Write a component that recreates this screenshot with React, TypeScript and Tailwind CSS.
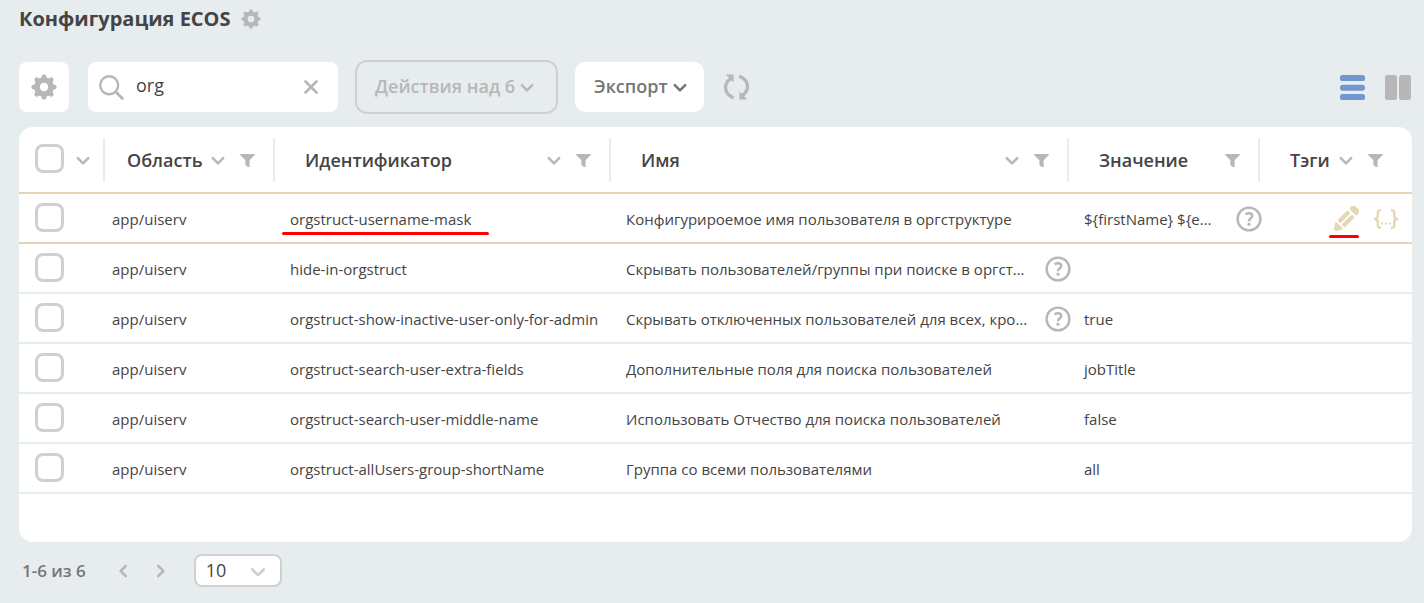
import { useState } from "react";

type Row = {
  scope: string;
  id: string;
  name: string;
  nameHint?: boolean;
  value: string;
  valueHint?: boolean;
  active?: boolean;
};

const rows: Row[] = [
  { scope: "app/uiserv", id: "orgstruct-username-mask", name: "Конфигурироемое имя пользователя в оргструктуре", value: "${firstName} ${e…", valueHint: true, active: true },
  { scope: "app/uiserv", id: "hide-in-orgstruct", name: "Скрывать пользователей/группы при поиске в оргст…", nameHint: true, value: "" },
  { scope: "app/uiserv", id: "orgstruct-show-inactive-user-only-for-admin", name: "Скрывать отключенных пользователей для всех, кро…", nameHint: true, value: "true" },
  { scope: "app/uiserv", id: "orgstruct-search-user-extra-fields", name: "Дополнительные поля для поиска пользователей", value: "jobTitle" },
  { scope: "app/uiserv", id: "orgstruct-search-user-middle-name", name: "Использовать Отчество для поиска пользователей", value: "false" },
  { scope: "app/uiserv", id: "orgstruct-allUsers-group-shortName", name: "Группа со всеми пользователями", value: "all" },
];

function Gear({ className }: { className: string }) {
  return (
    <svg viewBox="0 0 26 26" className={className} aria-hidden="true">
      <circle cx="13" cy="13" r="7" fill="none" stroke="currentColor" strokeWidth="5.6" />
      {[0, 45, 90, 135, 180, 225, 270, 315].map((angle) => (
        <path
          key={angle}
          d="M9.8 5 11 1.6Q11.3 .5 12.2 .5h1.6Q14.7 .5 15 1.6L16.2 5Z"
          fill="currentColor"
          transform={`rotate(${angle} 13 13)`}
        />
      ))}
    </svg>
  );
}

function Chevron({ className }: { className: string }) {
  return (
    <svg viewBox="0 0 14 10" className={className} fill="none" stroke="currentColor" strokeWidth="2.5" strokeLinecap="round" strokeLinejoin="round" aria-hidden="true">
      <path d="M1.8 2.2 7 7.4 12.2 2.2" />
    </svg>
  );
}

function Funnel() {
  return (
    <svg viewBox="0 0 15 13" className="h-[13px] w-[15px]" fill="currentColor" aria-hidden="true">
      <path d="M.2 0h14.6v1L9.6 6.2V13H7.8L5.4 11V6.2L.2 1Z" />
    </svg>
  );
}

function Hint() {
  return (
    <button type="button" aria-label="Подсказка" className="-mr-[2px] shrink-0 text-[#b7b7b7]">
      <svg viewBox="0 0 26 26" className="block size-[26px]" fill="none" stroke="currentColor" aria-hidden="true">
        <circle cx="13" cy="13" r="11.4" strokeWidth="2.4" />
        <path d="M9.6 8.4Q11.2 7.3 13 7.3c2 0 3.2 1 3.2 2.6 0 1.4-.9 2-1.8 2.7-.9.7-1.4 1.2-1.4 2.6" strokeWidth="2.5" />
        <circle cx="13" cy="18.2" r="1.6" fill="currentColor" stroke="none" />
      </svg>
    </button>
  );
}

function Pencil() {
  return (
    <svg viewBox="0 0 26 26" className="block size-[26px]" fill="currentColor" aria-hidden="true">
      <g transform="rotate(45 13 13)">
        <rect x="7.8" y="-2.8" width="10.4" height="6.4" rx="1.8" />
        <rect x="7.8" y="5.6" width="4.4" height="14.6" rx="1.3" />
        <rect x="13.8" y="5.6" width="4.4" height="14.6" rx="1.3" />
        <path d="M8.6 22h8.8q1 0 .6 1l-3.4 5.4q-1.6 1.6-3.2 0L8 23q-.4-1 .6-1Z" />
      </g>
    </svg>
  );
}

function Braces() {
  return (
    <svg viewBox="0 0 26 22" className="block h-[22px] w-[26px]" fill="none" stroke="currentColor" strokeWidth="2.3" aria-hidden="true">
      <path d="M8 2.3H6.6Q4.8 2.3 4.8 4.2V8Q4.8 11 1 11 4.8 11 4.8 14v3.8q0 1.9 1.8 1.9H8" />
      <path d="M18 2.3h1.4q1.8 0 1.8 1.9V8q0 3 3.8 3-3.8 0-3.8 3v3.8q0 1.9-1.8 1.9H18" />
      <path d="M8.2 15.5h2M12 15.5h2M15.8 15.5h2" strokeWidth="2" />
    </svg>
  );
}

function Tick({ label }: { label: string }) {
  return (
    <input
      type="checkbox"
      aria-label={label}
      className="mb-[2px] block size-[29px] shrink-0 appearance-none rounded-lg border-3 border-[#d0d0d0] bg-white checked:bg-[#7396cd]"
    />
  );
}

function Head({ title, sortable = true, last = false }: { title: string; sortable?: boolean; last?: boolean }) {
  return (
    <th scope="col" className="h-[67px] border-b-2 border-[#e4d8b4] p-0 text-left">
      <div className={last ? "flex h-11 items-center pr-[29px] pl-[30px]" : "flex h-11 items-center border-r-2 border-[#e7ecee] pr-[18px] pl-[30px]"}>
        <span className="grow text-[18px] leading-6 font-semibold">{title}</span>
        {sortable && (
          <button type="button" aria-label={"Сортировать: " + title} className="mt-[2px] mr-[15px] text-[#b7b7b7]">
            <Chevron className="block h-[10px] w-[14px]" />
          </button>
        )}
        <button type="button" aria-label={"Фильтр: " + title} className="mt-px text-[#b7b7b7]">
          <Funnel />
        </button>
      </div>
    </th>
  );
}

export default function App() {
  const [query, setQuery] = useState("org");

  return (
    <main className="min-h-screen bg-[#e7ecee] pr-3 pb-4 pl-[19px] font-['Open_Sans','Noto_Sans',sans-serif] text-[#444]">
      <header className="flex h-[38px] items-center gap-[10px]">
        <h1 className="text-[20px] leading-6 font-bold">Конфигурация ECOS</h1>
        <button type="button" aria-label="Настройки журнала" className="text-[#b7b7b7]">
          <Gear className="block size-5" />
        </button>
      </header>

      <div className="mt-[22px] flex h-[54px] items-center gap-[17px]">
        <button type="button" aria-label="Настройки" className="mr-[2px] flex size-[50px] items-center justify-center rounded-lg bg-white text-[#b7b7b7]">
          <Gear className="size-[26px]" />
        </button>

        <div className="flex h-[50px] w-[250px] items-center rounded-lg bg-white pr-5 pl-[11px] text-[#b7b7b7]">
          <svg viewBox="0 0 25 25" className="size-[25px] shrink-0" fill="none" stroke="currentColor" strokeWidth="2.4" strokeLinecap="round" aria-hidden="true">
            <circle cx="10.2" cy="10.2" r="9" />
            <path d="m17 17 6.4 6.4" strokeWidth="2.8" />
          </svg>
          <input
            type="text"
            aria-label="Поиск"
            value={query}
            onChange={(e) => setQuery(e.target.value)}
            className="ml-3 w-0 grow bg-transparent pb-1 text-[18px] leading-6 text-[#444] outline-none"
          />
          <button type="button" aria-label="Очистить" onClick={() => setQuery("")}>
            <svg viewBox="0 0 14 14" className="block size-[14px]" fill="none" stroke="currentColor" strokeWidth="2.6" strokeLinecap="round" aria-hidden="true">
              <path d="m1.5 1.5 11 11M12.5 1.5l-11 11" />
            </svg>
          </button>
        </div>

        <button type="button" disabled className="flex h-[54px] w-[203px] items-center gap-[5px] rounded-xl border-2 border-[#d0d0d0] pb-0.5 pl-[18px] text-[18px] leading-6 font-semibold whitespace-nowrap text-[#b7b7b7]">
          Действия над 6
          <Chevron className="mt-1 h-[10px] w-[14px]" />
        </button>

        <button type="button" className="flex h-[50px] w-[129px] items-center gap-[5px] rounded-[10px] bg-white pb-0.5 pl-[19px] text-[18px] leading-6 font-semibold text-[#767676]">
          Экспорт
          <Chevron className="mt-1 h-[10px] w-[14px]" />
        </button>

        <button type="button" aria-label="Обновить" className="ml-[2px] text-[#b7b7b7]">
          <svg viewBox="0 0 26 26" className="block size-[26px]" fill="none" stroke="currentColor" strokeWidth="3.2" aria-hidden="true">
            <path d="M7.6 4.6C.2 9.8.6 20 10.8 23.8" />
            <path d="M19.4 21.4C26.8 16.2 26.4 6 16.2 2.2" />
            <path d="M2.6.6h8v8Z" fill="currentColor" stroke="none" />
            <path d="M24.4 25.4h-8v-8Z" fill="currentColor" stroke="none" />
          </svg>
        </button>

        <div className="ml-auto flex items-center gap-5 pr-px">
          <button type="button" aria-label="Список" className="text-[#7396cd]">
            <svg viewBox="0 0 25 25" className="block size-[25px]" fill="currentColor" aria-hidden="true">
              <rect y="0" width="25" height="6" rx="2.6" />
              <rect y="9.7" width="25" height="6" rx="2.6" />
              <rect y="19" width="25" height="6" rx="2.6" />
            </svg>
          </button>
          <button type="button" aria-label="Просмотр" className="text-[#b7b7b7]">
            <svg viewBox="0 0 26 25" className="block h-[25px] w-[26px]" fill="currentColor" aria-hidden="true">
              <rect width="12" height="25" rx="2.5" />
              <rect x="14" width="12" height="25" rx="2.5" />
            </svg>
          </button>
        </div>
      </div>

      <section className="mt-[13px] overflow-hidden rounded-[14px] bg-white pb-12">
        <table className="w-full table-fixed border-separate border-spacing-0">
          <colgroup>
            <col className="w-[86px]" />
            <col className="w-[170px]" />
            <col className="w-[336px]" />
            <col />
            <col className="w-[191px]" />
            <col className="w-[152px]" />
          </colgroup>
          <thead>
            <tr>
              <th className="h-[67px] border-b-2 border-[#e4d8b4] p-0">
                <div className="flex h-11 items-center border-r-2 border-[#e7ecee] pl-4">
                  <Tick label="Выбрать все" />
                  <button type="button" aria-label="Параметры выбора" className="mt-[2px] ml-3 text-[#b7b7b7]">
                    <Chevron className="block h-[10px] w-[14px]" />
                  </button>
                </div>
              </th>
              <th scope="col" className="h-[67px] border-b-2 border-[#e4d8b4] p-0 text-left">
                <div className="flex h-11 items-center border-r-2 border-[#e7ecee] pr-[18px] pl-[22px]">
                  <span className="grow text-[18px] leading-6 font-semibold">Область</span>
                  <button type="button" aria-label="Сортировать: Область" className="mt-[2px] mr-[15px] text-[#b7b7b7]">
                    <Chevron className="block h-[10px] w-[14px]" />
                  </button>
                  <button type="button" aria-label="Фильтр: Область" className="mt-px text-[#b7b7b7]">
                    <Funnel />
                  </button>
                </div>
              </th>
              <Head title="Идентификатор" />
              <Head title="Имя" />
              <Head title="Значение" sortable={false} />
              <Head title="Тэги" last />
            </tr>
          </thead>
          <tbody className="text-[15px] leading-5 whitespace-nowrap">
            {rows.map((row) => (
              <tr
                key={row.id}
                className={row.active ? "[&>td]:h-[50px] [&>td]:border-b-2 [&>td]:border-[#e4d8b4]" : "[&>td]:h-[50px] [&>td]:border-b-2 [&>td]:border-[#e7ecee]"}
              >
                <td className="p-0 pt-px pl-4">
                  <Tick label={"Выбрать " + row.id} />
                </td>
                <td className="p-0 pt-0.5 pl-[7px]">{row.scope}</td>
                <td className="p-0 pt-0.5 pl-[15px]">
                  <span className="relative">
                    {row.id}
                    {row.active && <span className="absolute -right-[18px] -bottom-[6px] -left-2 h-[3px] rounded-full bg-[#ff0000]" />}
                  </span>
                </td>
                <td className="p-0 pt-0.5 pl-[15px]">
                  <div className="flex items-center justify-between">
                    {row.name}
                    {row.nameHint && <Hint />}
                  </div>
                </td>
                <td className="p-0 pt-0.5 pl-[15px]">
                  <div className="flex items-center justify-between">
                    {row.value}
                    {row.valueHint && <Hint />}
                  </div>
                </td>
                <td className="p-0 pt-0.5 pr-[13px]">
                  {row.active && (
                    <div className="flex items-center justify-end gap-[14px] text-[#e4d8b4]">
                      <button type="button" aria-label="Изменить" className="relative">
                        <Pencil />
                        <span className="absolute -bottom-[6px] -left-1 h-[3px] w-[30px] rounded-full bg-[#ff0000]" />
                      </button>
                      <button type="button" aria-label="Изменить JSON">
                        <Braces />
                      </button>
                    </div>
                  )}
                </td>
              </tr>
            ))}
          </tbody>
        </table>
      </section>

      <footer className="mt-3 flex h-[33px] items-center pl-[3px] leading-6">
        <span className="text-[17px] font-semibold text-[#767676]">1-6 из 6</span>
        <button type="button" aria-label="Предыдущая страница" className="ml-[30px] text-[#b7b7b7]">
          <Chevron className="block h-[10px] w-[14px] rotate-90" />
        </button>
        <button type="button" aria-label="Следующая страница" className="ml-6 text-[#b7b7b7]">
          <Chevron className="block h-[10px] w-[14px] -rotate-90" />
        </button>
        <div className="relative ml-[26px]">
          <select aria-label="Записей на странице" className="block h-[33px] w-[88px] appearance-none rounded-lg border-2 border-[#d0d0d0] bg-white pb-0.5 pl-[10px] text-[18px] font-medium text-[#444]">
            <option>10</option>
          </select>
          <Chevron className="pointer-events-none absolute top-[13px] right-4 h-[11px] w-[16px] text-[#d0d0d0]" />
        </div>
      </footer>
    </main>
  );
}
